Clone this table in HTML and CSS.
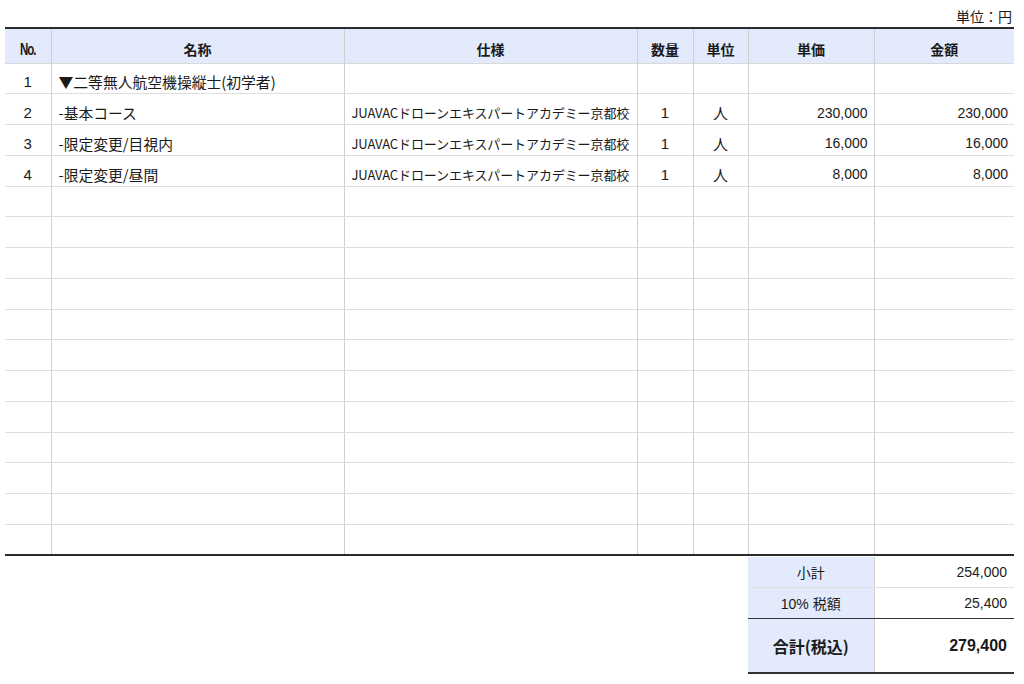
FILE: index.html
```html
<!DOCTYPE html>
<html lang="ja">
<head>
<meta charset="utf-8">
<link rel="stylesheet" href="styles.css">
</head>
<body>
<div class="page">
  <div class="unit">単位：円</div>
  <table class="items">
    <colgroup>
      <col class="c-no"><col class="c-name"><col class="c-spec"><col class="c-qty"><col class="c-unit"><col class="c-price"><col class="c-amount">
    </colgroup>
    <thead>
      <tr>
        <th><span class="no-mark">No.</span></th>
        <th>名称</th>
        <th>仕様</th>
        <th>数量</th>
        <th>単位</th>
        <th>単価</th>
        <th>金額</th>
      </tr>
    </thead>
    <tbody>
      <tr><td class="num">1</td><td class="name">▼二等無人航空機操縦士(初学者)</td><td></td><td></td><td></td><td></td><td></td></tr>
      <tr><td class="num">2</td><td class="name">-基本コース</td><td class="spec">JUAVACドローンエキスパートアカデミー京都校</td><td class="ctr">1</td><td class="ctr">人</td><td class="money">230,000</td><td class="money">230,000</td></tr>
      <tr><td class="num">3</td><td class="name">-限定変更/目視内</td><td class="spec">JUAVACドローンエキスパートアカデミー京都校</td><td class="ctr">1</td><td class="ctr">人</td><td class="money">16,000</td><td class="money">16,000</td></tr>
      <tr><td class="num">4</td><td class="name">-限定変更/昼間</td><td class="spec">JUAVACドローンエキスパートアカデミー京都校</td><td class="ctr">1</td><td class="ctr">人</td><td class="money">8,000</td><td class="money">8,000</td></tr>
      <tr><td></td><td></td><td></td><td></td><td></td><td></td><td></td></tr>
      <tr><td></td><td></td><td></td><td></td><td></td><td></td><td></td></tr>
      <tr><td></td><td></td><td></td><td></td><td></td><td></td><td></td></tr>
      <tr><td></td><td></td><td></td><td></td><td></td><td></td><td></td></tr>
      <tr><td></td><td></td><td></td><td></td><td></td><td></td><td></td></tr>
      <tr><td></td><td></td><td></td><td></td><td></td><td></td><td></td></tr>
      <tr><td></td><td></td><td></td><td></td><td></td><td></td><td></td></tr>
      <tr><td></td><td></td><td></td><td></td><td></td><td></td><td></td></tr>
      <tr><td></td><td></td><td></td><td></td><td></td><td></td><td></td></tr>
      <tr><td></td><td></td><td></td><td></td><td></td><td></td><td></td></tr>
      <tr><td></td><td></td><td></td><td></td><td></td><td></td><td></td></tr>
      <tr><td></td><td></td><td></td><td></td><td></td><td></td><td></td></tr>
    </tbody>
  </table>
  <div class="totals-wrap">
    <table class="totals">
      <colgroup><col class="c-price"><col class="c-amount"></colgroup>
      <tr class="t-sub"><th>小計</th><td>254,000</td></tr>
      <tr class="t-tax"><th>10% 税額</th><td>25,400</td></tr>
      <tr class="t-total"><th>合計(税込)</th><td>279,400</td></tr>
    </table>
  </div>
</div>
</body>
</html>
```

FILE: styles.css
```css
* { box-sizing: border-box; }
html, body { margin: 0; padding: 0; background: #ffffff; }
body {
  font-family: "Liberation Sans", "Noto Sans CJK JP", sans-serif;
  color: #1a1a1a;
  font-size: 14px;
}
.page {
  width: 1009px;
  margin-left: 5px;
}
.unit {
  height: 27px;
  padding-top: 7px;
  padding-right: 2px;
  text-align: right;
  font-size: 14px;
  line-height: 18px;
  font-family: "Noto Sans CJK JP", sans-serif;
}
table {
  border-collapse: collapse;
  table-layout: fixed;
}
.items {
  width: 1009px;
}
.c-no { width: 46px; }
.c-name { width: 293px; }
.c-spec { width: 293px; }
.c-qty { width: 56px; }
.c-unit { width: 55px; }
.c-price { width: 126px; }
.c-amount { width: 140px; }

.items thead tr { height: 35px; }
.items th {
  background: #e2eafb;
  border-top: 2px solid #2b2b2b;
  border-bottom: 1px solid #d9d9d9;
  border-left: 1px solid #cfcfcf;
  border-right: 1px solid #cfcfcf;
  font-weight: bold;
  font-size: 14px;
  font-family: "Noto Sans CJK JP", sans-serif;
  padding: 7px 0 0 0;
  text-align: center;
  vertical-align: middle;
}
.items th:first-child, .items td:first-child { border-left: none; }
.items th:last-child, .items td:last-child { border-right: none; }
.no-mark {
  display: inline-block;
  font-family: "Liberation Sans", sans-serif;
  font-weight: bold;
  font-size: 16px;
  letter-spacing: -1.5px;
  transform: scaleX(0.72);
}
.items tbody tr { height: 30.75px; }
.items td {
  border-bottom: 1px solid #dedede;
  border-left: 1px solid #cfcfcf;
  border-right: 1px solid #cfcfcf;
  padding: 7px 7px 0 7px;
  vertical-align: middle;
  white-space: nowrap;
  overflow: hidden;
}
.items tbody tr:last-child td { border-bottom: 2px solid #2b2b2b; }
.num { text-align: center; font-size: 15px; }
.name {
  font-family: "Noto Sans CJK JP", sans-serif;
  font-size: 14.8px;
}
.spec {
  font-family: "Noto Sans CJK JP", sans-serif;
  font-size: 13px;
  letter-spacing: -0.1px;
}
.ctr {
  text-align: center;
  font-family: "Liberation Sans", "Noto Sans CJK JP", sans-serif;
  font-size: 15px;
}
.money { text-align: right; }
.items td.money { padding-right: 6px; }

.totals-wrap {
  display: flex;
  justify-content: flex-end;
}
.totals {
  width: 266px;
  margin-top: 1px;
}
.totals th {
  background: #e2eafb;
  font-weight: normal;
  font-family: "Liberation Sans", "Noto Sans CJK JP", sans-serif;
  font-size: 14px;
  text-align: center;
  border-right: 1px solid #d3d3d3;
  padding: 1px 0 0 0;
}
.totals td {
  text-align: right;
  padding: 1px 7px 0 7px;
  font-size: 14px;
}
.t-sub { height: 30px; }
.t-sub th, .t-sub td { border-bottom: 1px solid #e0e0e0; }
.t-tax { height: 31px; }
.t-tax th, .t-tax td { border-bottom: 1px solid #333333; }
.t-total { height: 55px; }
.t-total th, .t-total td { border-bottom: 2px solid #333333; }
.t-total th {
  font-weight: bold;
  font-size: 16px;
  font-family: "Noto Sans CJK JP", sans-serif;
}
.t-total td {
  font-weight: bold;
  font-size: 16px;
}
```
